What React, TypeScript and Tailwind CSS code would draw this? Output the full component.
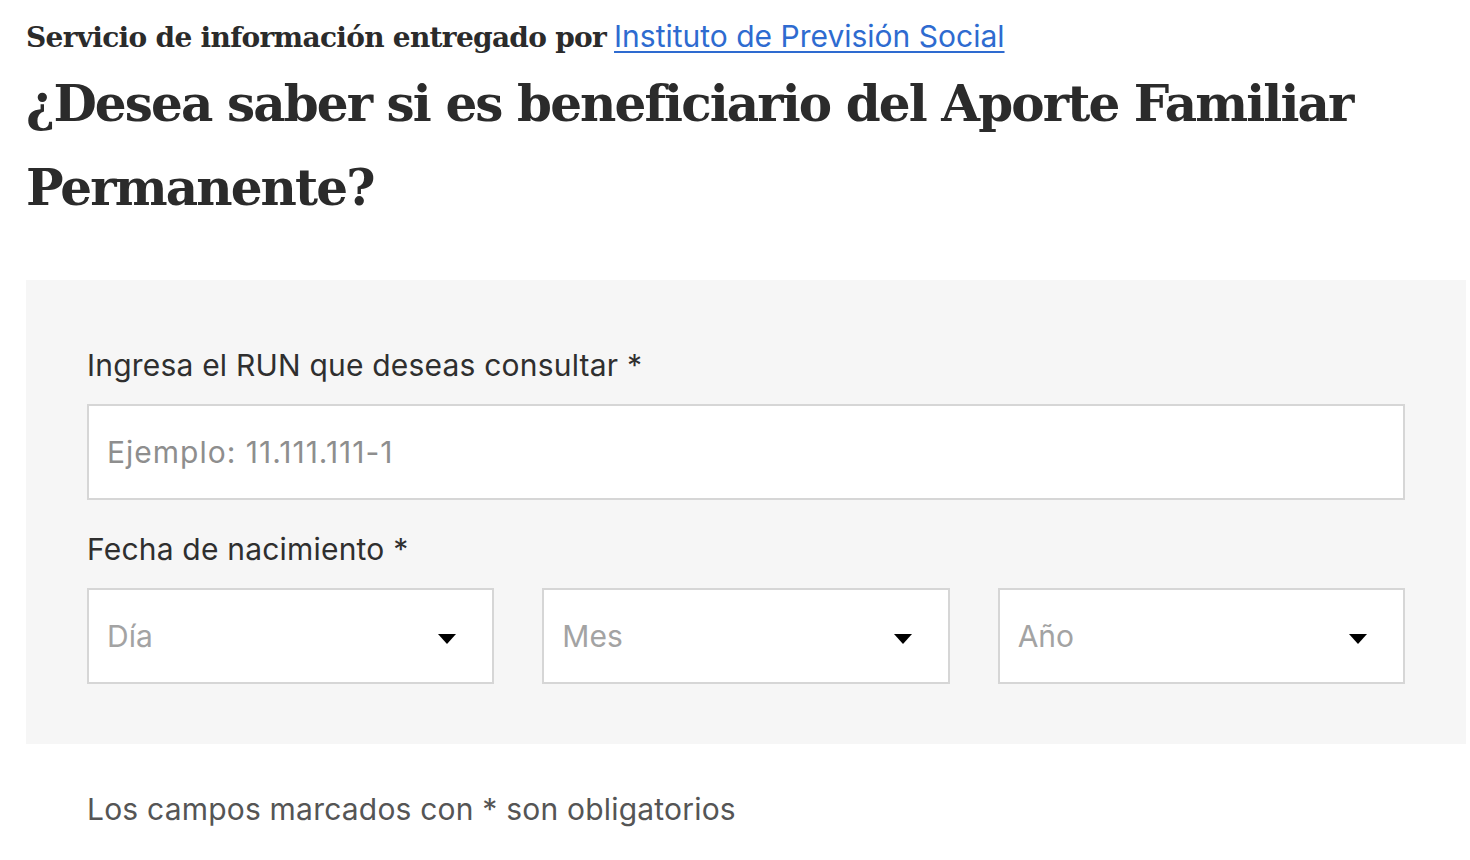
import React from 'react'

const body = { fontFamily: 'Inter, Roboto, "Liberation Sans", sans-serif' }
const slab = { fontFamily: '"DejaVu Serif", "Liberation Serif", serif' }

function SelectBox({ label }: { label: string }) {
  return (
    <div className="flex h-[96px] items-center justify-between border-2 border-[#d6d6d6] bg-white pl-[18px] pr-[36px]">
      <span className="text-[30px] text-[#a3a3a3]">{label}</span>
      <svg width="18" height="10" viewBox="0 0 18 10" className="mt-[6px]">
        <path d="M0 0h18L9 10z" fill="#000" />
      </svg>
    </div>
  )
}

export default function App() {
  return (
    <div className="min-h-screen bg-white pl-[26px] pr-[4px] pt-[15px]" style={body}>
      <p className="text-[28px] leading-[42px] text-[#2b2b2b]">
        <span className="font-bold tracking-[-0.7px]" style={slab}>
          Servicio de información entregado por
        </span>{' '}
        <a href="#" className="text-[30px] text-[#2e6bd0] underline underline-offset-[4px] decoration-[2px]">
          Instituto de Previsión Social
        </a>
      </p>

      <h1
        className="mt-[3px] text-[50px] font-bold leading-[84px] tracking-[-1.9px] text-[#2b2b2b]"
        style={slab}
      >
        ¿Desea saber si es beneficiario del Aporte Familiar Permanente?
      </h1>

      <div className="mt-[50px] bg-[#f6f6f6] px-[61px] pb-[60px] pt-[64px]">
        <label className="block text-[30px] leading-[42px] tracking-[0.2px] text-[#2f2f2f]">
          Ingresa el RUN que deseas consultar *
        </label>
        <input
          className="mt-[18px] block h-[96px] w-full border-2 border-[#d6d6d6] bg-white px-[18px] text-[30px] tracking-[1px] text-[#333] outline-none placeholder:text-[#8e8e8e]"
          placeholder="Ejemplo: 11.111.111-1"
          style={body}
        />

        <label className="mt-[28px] block text-[30px] leading-[42px] tracking-[0.2px] text-[#2f2f2f]">
          Fecha de nacimiento *
        </label>
        <div className="mt-[18px] grid grid-cols-3 gap-[48px]">
          <SelectBox label="Día" />
          <SelectBox label="Mes" />
          <SelectBox label="Año" />
        </div>
      </div>

      <p className="mt-[44px] pl-[61px] text-[30px] leading-[42px] tracking-[0.2px] text-[#555]">
        Los campos marcados con * son obligatorios
      </p>
    </div>
  )
}
